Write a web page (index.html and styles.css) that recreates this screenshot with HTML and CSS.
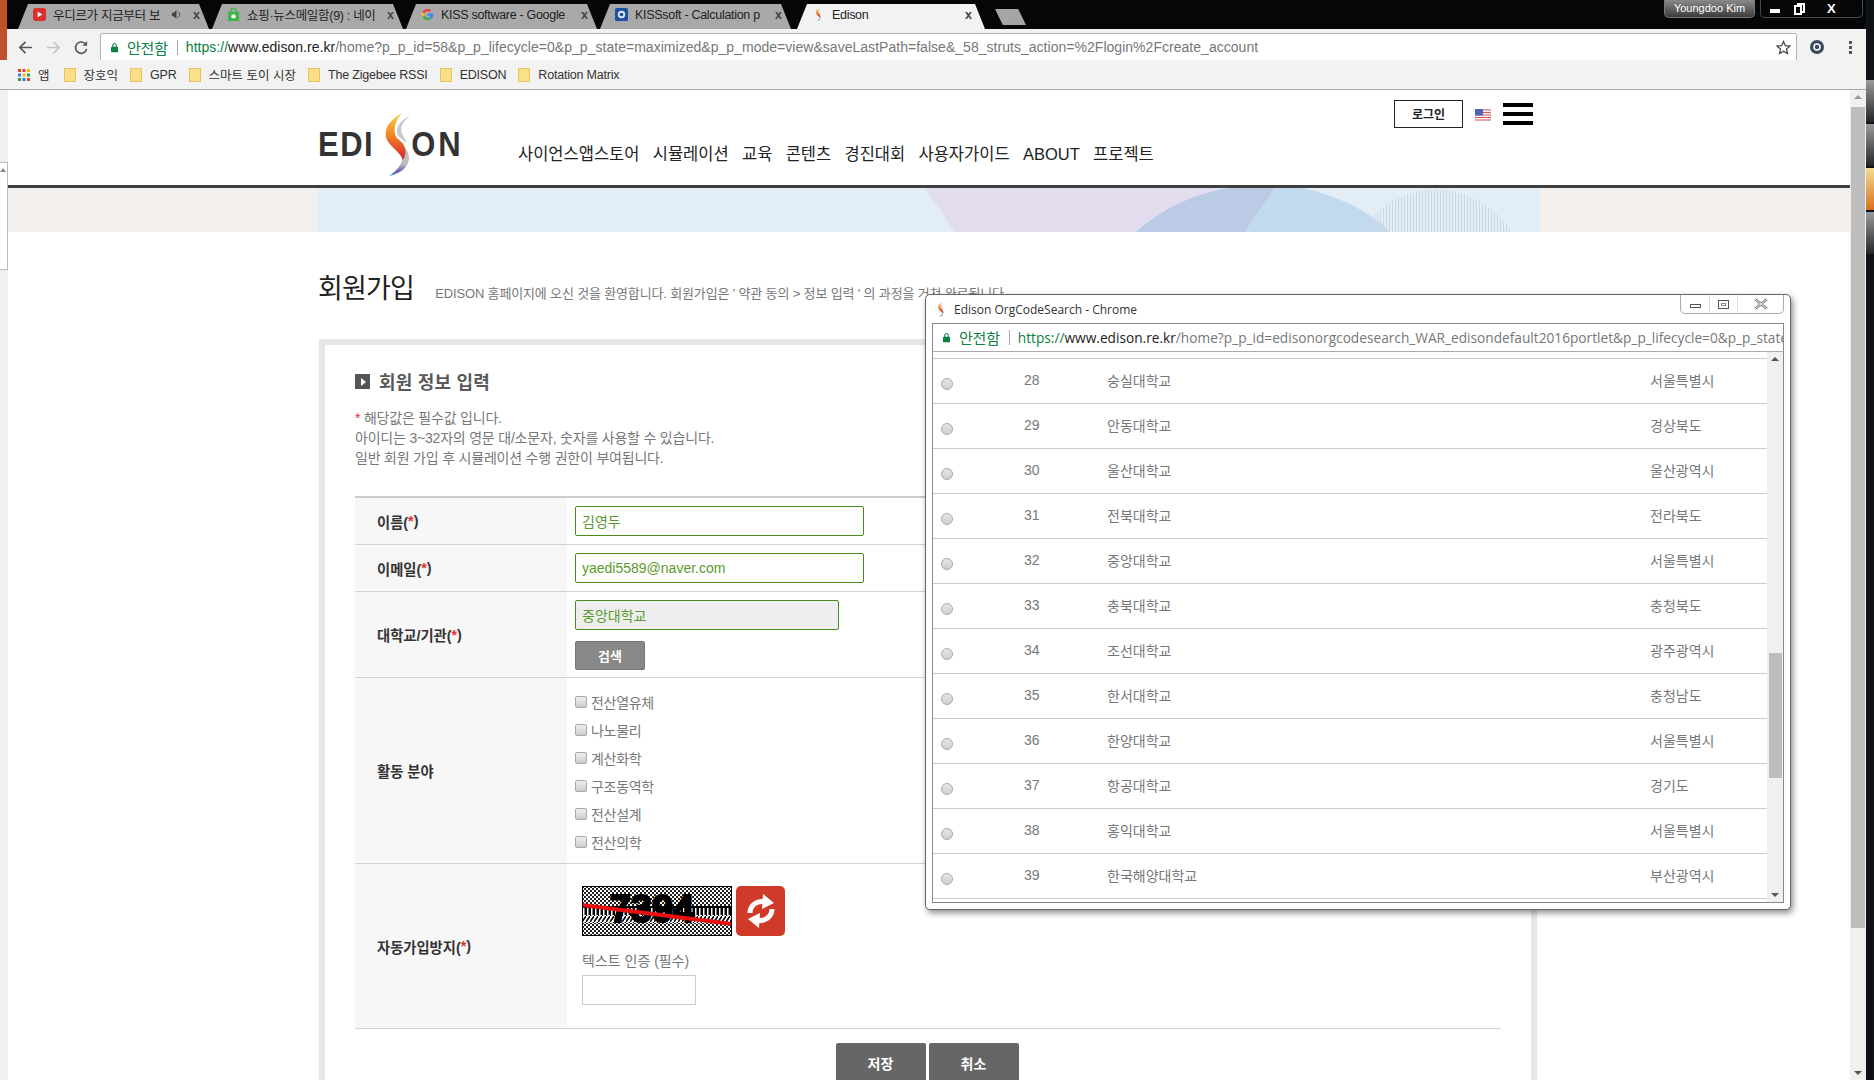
FILE: index.html
```html
<!DOCTYPE html>
<html lang="ko">
<head>
  <meta charset="UTF-8">
  <title>Edison</title>
  <link rel="stylesheet" href="styles.css">
</head>
<body>
  <svg class="defs" width="0" height="0" aria-hidden="true">
    <defs>
      <linearGradient id="sWarm" x1="0" y1="0" x2="0" y2="1">
        <stop offset="0" stop-color="#f4d24a"/>
        <stop offset="0.45" stop-color="#f08a24"/>
        <stop offset="1" stop-color="#d8202c"/>
      </linearGradient>
      <linearGradient id="sCool" x1="0" y1="0" x2="0" y2="1">
        <stop offset="0" stop-color="#c4c4c4"/>
        <stop offset="0.65" stop-color="#bdbdbd"/>
        <stop offset="0.85" stop-color="#7a5cc0"/>
        <stop offset="1" stop-color="#3a9ad8"/>
      </linearGradient>
      <symbol id="swoosh" viewBox="0 0 25 63">
        <path fill="#c8c8c8" d="M25 3C17 6 11 13 12 20C13 24 18 27 22 30C20 24 14 20 17 12C18 9 21 6 25 3Z"/>
        <path fill="url(#sCool)" d="M13 29C19 33 24 38 24 45C24 54 15 61 4 63C10 59 15 54 17 48C18 42 17 35 13 29Z"/>
        <path fill="url(#sWarm)" d="M17 0C5 7 -1 15 1 24C3 33 14 37 18 47C23 38 20 31 13 26C8 22 8 10 17 0Z"/>
      </symbol>
    </defs>
  </svg>

  <!-- 브라우저 상단 -->
  <div class="tabbar">
    <div class="tab">
      <svg class="tab-icon" viewBox="0 0 14 14"><rect width="14" height="14" rx="3" fill="#d9302a"/><path d="M5 4l5 3-5 3z" fill="#fff"/></svg>
      <span class="tab-title">우디르가 지금부터 보</span>
      <svg class="tab-audio" viewBox="0 0 12 12"><path d="M1 4h2l3-3v10L3 8H1z" fill="#444"/><path d="M8 3c2 2 2 4 0 6" fill="none" stroke="#444"/></svg>
      <span class="tab-close">x</span>
    </div>
    <div class="tab">
      <svg class="tab-icon" viewBox="0 0 14 14"><path d="M1 4h12v10H1z" fill="#3fb54a"/><path d="M4 4c0-5 6-5 6 0" fill="none" stroke="#3fb54a" stroke-width="1.5"/><circle cx="7" cy="9" r="2.4" fill="#fff"/></svg>
      <span class="tab-title">쇼핑·뉴스메일함(9) : 네이</span>
      <span class="tab-close">x</span>
    </div>
    <div class="tab">
      <svg class="tab-icon" viewBox="0 0 14 14"><path d="M12.6 7.2c0-.5 0-.9-.1-1.3H7v2.5h3.2c-.2.8-.6 1.4-1.2 1.8l2 1.5c1.6-1.2 2.6-2.9 2.6-4.5z" fill="#4285f4"/><path d="M7 13c1.7 0 3-.6 4-1.5L9 10c-.5.4-1.2.6-2 .6-1.6 0-2.9-1-3.4-2.5l-2 1.6C2.6 11.7 4.6 13 7 13z" fill="#34a853"/><path d="M3.6 8.1c-.2-.7-.2-1.5 0-2.2l-2-1.6c-.9 1.7-.9 3.7 0 5.4z" fill="#fbbc05"/><path d="M7 3.4c.9 0 1.7.3 2.3.9l1.8-1.8C10 1.5 8.600 1 7 1 4.600 1 2.600 2.300 1.600 4.300l2 1.600C4.100 4.400 5.400 3.400 7 3.400z" fill="#ea4335"/></svg>
      <span class="tab-title">KISS software - Google</span>
      <span class="tab-close">x</span>
    </div>
    <div class="tab">
      <svg class="tab-icon" viewBox="0 0 14 14"><rect width="14" height="14" rx="2" fill="#1d4f9c"/><circle cx="7" cy="7" r="4" fill="#dfe9f5"/><circle cx="7" cy="7" r="2" fill="#1d4f9c"/></svg>
      <span class="tab-title">KISSsoft - Calculation p</span>
      <span class="tab-close">x</span>
    </div>
    <div class="tab tab-active">
      <svg class="tab-icon" viewBox="0 0 25 63"><use href="#swoosh"/></svg>
      <span class="tab-title">Edison</span>
      <span class="tab-close">x</span>
    </div>
    <div class="tab-new"></div>
    <div class="win-area">
      <div class="win-user">Youngdoo Kim</div>
      <div class="win-buttons">
        <svg class="win-min" viewBox="0 0 12 12"><rect x="1" y="6" width="10" height="4" fill="#fff"/></svg>
        <svg class="win-max" viewBox="0 0 12 12"><path d="M4 1h7v8H9M2 3h6v8H2z" fill="none" stroke="#fff" stroke-width="2"/></svg>
        <span class="win-close">X</span>
      </div>
    </div>
  </div>

  <div class="toolbar">
    <svg class="nav-icon" viewBox="0 0 16 16"><path d="M15 8H2M8 2L2 8l6 6" fill="none" stroke="#555" stroke-width="1.8"/></svg>
    <svg class="nav-icon" viewBox="0 0 16 16"><path d="M1 8h13M8 2l6 6-6 6" fill="none" stroke="#c4c4c4" stroke-width="1.8"/></svg>
    <svg class="nav-icon" viewBox="0 0 16 16"><path d="M13.5 9.5A6 6 0 1 1 12 4" fill="none" stroke="#555" stroke-width="1.8"/><path d="M14 1v5H9z" fill="#555"/></svg>
    <div class="omnibox">
      <svg class="lock" viewBox="0 0 8 11"><path d="M2 5V3a2 2 0 0 1 4 0v2" fill="none" stroke="#0b8043" stroke-width="1.2"/><rect y="4.5" width="8" height="6.5" rx="1" fill="#0b8043"/></svg>
      <span class="secure">안전함</span>
      <span class="omni-sep"></span>
      <span class="url"><span class="url-https">https://</span><span class="url-host">www.edison.re.kr</span>/home?p_p_id=58&amp;p_p_lifecycle=0&amp;p_p_state=maximized&amp;p_p_mode=view&amp;saveLastPath=false&amp;_58_struts_action=%2Flogin%2Fcreate_account</span>
      <svg class="star" viewBox="0 0 16 16"><path d="M8 1.5l2 4.500 4.800.5-3.600 3.200 1 4.800L8 12l-4.200 2.500 1-4.800L1.200 6.500 6 6z" fill="none" stroke="#444" stroke-width="1.3"/></svg>
    </div>
    <svg class="ext" viewBox="0 0 14 14"><circle cx="7" cy="7" r="7" fill="#3a4a5c"/><circle cx="7" cy="7" r="3" fill="none" stroke="#fff" stroke-width="1.5"/></svg>
    <div class="dots"><i></i><i></i><i></i></div>
  </div>

  <div class="bookmarks">
    <svg class="apps" viewBox="0 0 12 12">
      <g fill="#d9453a"><rect width="3" height="3"/><rect x="4.5" width="3" height="3"/></g>
      <rect x="9" width="3" height="3" fill="#f2b600"/>
      <g fill="#3a7be0"><rect y="4.5" width="3" height="3"/></g>
      <rect x="4.5" y="4.5" width="3" height="3" fill="#f2b600"/>
      <rect x="9" y="4.5" width="3" height="3" fill="#2f9e4f"/>
      <g fill="#2f9e4f"><rect y="9" width="3" height="3"/></g>
      <rect x="4.5" y="9" width="3" height="3" fill="#3a7be0"/>
      <rect x="9" y="9" width="3" height="3" fill="#d9453a"/>
    </svg>
    <span class="bm-apps">앱</span>
    <span class="bm"><i class="folder"></i>장호익</span>
    <span class="bm bm-en"><i class="folder"></i>GPR</span>
    <span class="bm"><i class="folder"></i>스마트 토이 시장</span>
    <span class="bm bm-en"><i class="folder"></i>The Zigebee RSSI</span>
    <span class="bm bm-en"><i class="folder"></i>EDISON</span>
    <span class="bm bm-en"><i class="folder"></i>Rotation Matrix</span>
  </div>

  <div class="viewport">
    <div class="left-strip">
      <div class="strip-box"><span class="strip-arrow"></span></div>
    </div>

    <div class="page">
      <header class="site-header">
        <div class="header-inner">
          <a class="logo" aria-label="EDISON">
            <span class="logo-word">EDI</span>
            <svg class="logo-s" viewBox="0 0 25 63"><use href="#swoosh"/></svg>
            <span class="logo-word logo-word-end">ON</span>
          </a>
          <nav class="main-nav">
            <a>사이언스앱스토어</a>
            <a>시뮬레이션</a>
            <a>교육</a>
            <a>콘텐츠</a>
            <a>경진대회</a>
            <a>사용자가이드</a>
            <a>ABOUT</a>
            <a>프로젝트</a>
          </nav>
          <div class="header-right">
            <button class="login-btn">로그인</button>
            <svg class="flag" viewBox="0 0 16 12">
              <rect width="16" height="12" fill="#f3f3f8"/>
              <path d="M0 1h16M0 3.5h16M0 6h16M0 8.5h16M0 11h16" stroke="#e0585c" stroke-width="1.2"/>
              <rect width="8" height="6.5" fill="#4a64b8"/>
            </svg>
            <div class="hamburger"><i></i><i></i><i></i></div>
          </div>
        </div>
      </header>

      <div class="banner">
        <svg class="banner-art" viewBox="0 0 1222 44" preserveAspectRatio="none">
          <defs>
            <pattern id="stripes" width="3" height="4" patternUnits="userSpaceOnUse">
              <rect width="1" height="4" fill="#c9d9e8"/>
            </pattern>
          </defs>
          <path d="M607 0L637 44H818C845 20 875 6 910 0Z" fill="#e3dcef"/>
          <path d="M818 44C845 20 875 6 910 0H957L927 44Z" fill="#bccbe5"/>
          <path d="M957 0L927 44H1072C1050 22 1020 8 985 0Z" fill="#c1daee"/>
          <path d="M1045 44C1060 15 1090 2 1117 2C1150 2 1180 20 1194 44Z" fill="url(#stripes)"/>
        </svg>
      </div>

      <main class="content">
        <div class="page-title">
          <h1>회원가입</h1>
          <p>EDISON 홈페이지에 오신 것을 환영합니다. 회원가입은 ' 약관 동의 &gt; 정보 입력 ' 의 과정을 거쳐 완료됩니다.</p>
        </div>

        <section class="card">
          <h2 class="section-title"><i class="title-icon"></i>회원 정보 입력</h2>
          <div class="notes">
            <p><span class="req">*</span> 해당값은 필수값 입니다.</p>
            <p>아이디는 3~32자의 영문 대/소문자, 숫자를 사용할 수 있습니다.</p>
            <p>일반 회원 가입 후 시뮬레이션 수행 권한이 부여됩니다.</p>
          </div>

          <div class="form-table">
            <div class="form-row row-name">
              <div class="form-label">이름(<span class="req">*</span>)</div>
              <div class="form-field"><input class="text-input" value="김영두"></div>
            </div>
            <div class="form-row row-name">
              <div class="form-label">이메일(<span class="req">*</span>)</div>
              <div class="form-field"><input class="text-input" value="yaedi5589@naver.com"></div>
            </div>
            <div class="form-row row-org">
              <div class="form-label">대학교/기관(<span class="req">*</span>)</div>
              <div class="form-field field-stack">
                <input class="text-input input-readonly" value="중앙대학교" readonly>
                <button class="search-btn">검색</button>
              </div>
            </div>
            <div class="form-row row-area">
              <div class="form-label">활동 분야</div>
              <div class="form-field check-list">
                <label class="check"><input type="checkbox">전산열유체</label>
                <label class="check"><input type="checkbox">나노물리</label>
                <label class="check"><input type="checkbox">계산화학</label>
                <label class="check"><input type="checkbox">구조동역학</label>
                <label class="check"><input type="checkbox">전산설계</label>
                <label class="check"><input type="checkbox">전산의학</label>
              </div>
            </div>
            <div class="form-row row-captcha">
              <div class="form-label">자동가입방지(<span class="req">*</span>)</div>
              <div class="form-field captcha-field">
                <div class="captcha-line">
                  <svg class="captcha" viewBox="0 0 150 50">
                    <defs>
                      <pattern id="dots" width="4" height="4" patternUnits="userSpaceOnUse">
                        <rect width="4" height="4" fill="#fff"/>
                        <rect width="2" height="2" fill="#222"/>
                        <rect x="2" y="2" width="2" height="2" fill="#222"/>
                      </pattern>
                      <pattern id="bars" width="4" height="8" patternUnits="userSpaceOnUse">
                        <rect width="4" height="8" fill="#000"/>
                        <rect x="1" width="1.5" height="8" fill="#fff"/>
                      </pattern>
                      <pattern id="hatch" width="4" height="6" patternUnits="userSpaceOnUse">
                        <rect width="4" height="6" fill="#fff"/>
                        <path d="M0 6L4 0" stroke="#000" stroke-width="1.6"/>
                      </pattern>
                    </defs>
                    <rect width="150" height="50" fill="url(#dots)"/>
                    <rect y="20" width="150" height="8" fill="#000"/>
                    <rect y="22" width="150" height="7" fill="url(#bars)"/>
                    <rect y="29" width="150" height="8" fill="url(#hatch)"/>
                    <text class="captcha-text" x="70" y="36" text-anchor="middle">7394</text>
                    <path d="M0 19L150 38" stroke="#e80f0f" stroke-width="4"/>
                    <rect x=".5" y=".5" width="149" height="49" fill="none" stroke="#000"/>
                  </svg>
                  <button class="refresh-btn" aria-label="새로고침">
                    <svg viewBox="0 0 30 34">
                      <path d="M4 19A11.5 11.5 0 0 1 19 8" fill="none" stroke="#fff" stroke-width="5"/>
                      <path d="M17 0L28 9L16 15Z" fill="#fff"/>
                      <path d="M26 15A11.5 11.5 0 0 1 11 26" fill="none" stroke="#fff" stroke-width="5"/>
                      <path d="M13 34L2 25L14 19Z" fill="#fff"/>
                    </svg>
                  </button>
                </div>
                <div class="captcha-label">텍스트 인증 (필수)</div>
                <input class="captcha-input">
              </div>
            </div>
          </div>

          <div class="form-actions">
            <button class="action-btn">저장</button>
            <button class="action-btn">취소</button>
          </div>
        </section>
      </main>
    </div>

    <div class="page-scroll">
      <span class="arrow-up"></span>
      <div class="page-thumb"></div>
      <span class="arrow-down"></span>
    </div>
    <div class="taskbar-edge">
      <i class="edge-tile"></i>
      <i class="edge-tile"></i>
      <i class="edge-tile edge-orange"></i>
      <i class="edge-tile"></i>
    </div>
  </div>

  <!-- 기관 검색 팝업 -->
  <div class="popup">
    <div class="popup-title">
      <svg class="popup-fav" viewBox="0 0 25 63"><use href="#swoosh"/></svg>
      <span>Edison OrgCodeSearch - Chrome</span>
      <div class="popup-controls">
        <span class="ctl"><i class="ctl-min"></i></span>
        <span class="ctl"><i class="ctl-max"></i></span>
        <span class="ctl ctl-x">
          <svg viewBox="0 0 12 10"><path d="M1 1l10 8M11 1L1 9" stroke="#777" stroke-width="2.2"/><path d="M1 1l10 8M11 1L1 9" stroke="#fff" stroke-width=".8"/></svg>
        </span>
      </div>
    </div>
    <div class="popup-address">
      <svg class="lock" viewBox="0 0 8 11"><path d="M2 5V3a2 2 0 0 1 4 0v2" fill="none" stroke="#0b8043" stroke-width="1.2"/><rect y="4.5" width="8" height="6.5" rx="1" fill="#0b8043"/></svg>
      <span class="secure">안전함</span>
      <span class="omni-sep"></span>
      <span class="popup-url"><span class="url-https">https://</span><span class="url-host">www.edison.re.kr</span>/home?p_p_id=edisonorgcodesearch_WAR_edisondefault2016portlet&amp;p_p_lifecycle=0&amp;p_p_state</span>
    </div>
    <div class="popup-body">
      <div class="org-list">
        <div class="org-row"><i class="radio"></i><span>28</span><span>숭실대학교</span><span>서울특별시</span></div>
        <div class="org-row"><i class="radio"></i><span>29</span><span>안동대학교</span><span>경상북도</span></div>
        <div class="org-row"><i class="radio"></i><span>30</span><span>울산대학교</span><span>울산광역시</span></div>
        <div class="org-row"><i class="radio"></i><span>31</span><span>전북대학교</span><span>전라북도</span></div>
        <div class="org-row"><i class="radio"></i><span>32</span><span>중앙대학교</span><span>서울특별시</span></div>
        <div class="org-row"><i class="radio"></i><span>33</span><span>충북대학교</span><span>충청북도</span></div>
        <div class="org-row"><i class="radio"></i><span>34</span><span>조선대학교</span><span>광주광역시</span></div>
        <div class="org-row"><i class="radio"></i><span>35</span><span>한서대학교</span><span>충청남도</span></div>
        <div class="org-row"><i class="radio"></i><span>36</span><span>한양대학교</span><span>서울특별시</span></div>
        <div class="org-row"><i class="radio"></i><span>37</span><span>항공대학교</span><span>경기도</span></div>
        <div class="org-row"><i class="radio"></i><span>38</span><span>홍익대학교</span><span>서울특별시</span></div>
        <div class="org-row"><i class="radio"></i><span>39</span><span>한국해양대학교</span><span>부산광역시</span></div>
      </div>
      <div class="popup-scroll">
        <span class="arrow-up"></span>
        <div class="popup-thumb"></div>
        <span class="arrow-down"></span>
      </div>
    </div>
  </div>
</body>
</html>
```

FILE: styles.css
```css
* {
  box-sizing: border-box;
  margin: 0;
  padding: 0;
}
html, body {
  width: 1874px;
  height: 1080px;
  overflow: hidden;
}
body {
  position: relative;
  display: flex;
  flex-direction: column;
  background: #fff;
  font-family: "Liberation Sans", "Noto Sans CJK KR", sans-serif;
  color: #777;
}
.defs {
  position: absolute;
}
i {
  display: block;
}

/* tabs */
.tabbar {
  display: flex;
  align-items: flex-end;
  height: 29px;
  flex: none;
  padding-left: 18px;
  background: #050608;
  box-shadow: inset 7px 0 0 #c0502c;
}
.tab {
  display: flex;
  align-items: center;
  width: 191px;
  height: 25px;
  margin-right: 3px;
  padding: 0 9px 4px 15px;
  background: #a9a9a9;
  clip-path: polygon(10px 0, calc(100% - 10px) 0, 100% 100%, 0 100%);
  font-size: 12.5px;
  color: #222;
}
.tab-active {
  width: 188px;
  margin-left: 3px;
  padding-right: 13px;
  background: #f2f2f2;
}
.tab-icon {
  width: 13px;
  height: 13px;
  flex: none;
  margin-right: 7px;
}
.tab-title {
  flex: 1;
  overflow: hidden;
  white-space: nowrap;
  letter-spacing: -0.3px;
}
.tab-audio {
  width: 11px;
  height: 11px;
  flex: none;
  margin-right: 5px;
}
.tab-close {
  flex: none;
  margin-left: 6px;
  font-weight: bold;
  color: #444;
}
.tab-new {
  width: 31px;
  height: 16px;
  margin: 0 0 4px 7px;
  background: #a5a5a5;
  clip-path: polygon(0 0, 75% 0, 100% 100%, 25% 100%);
}
.win-area {
  display: flex;
  align-self: flex-start;
  margin-left: auto;
  padding-right: 11px;
}
.win-user {
  width: 91px;
  height: 18px;
  border: 1px solid #777;
  border-top: none;
  border-radius: 0 0 5px 5px;
  background: linear-gradient(#8a8a8a, #3c3c3c);
  font-size: 11px;
  line-height: 16px;
  text-align: center;
  color: #fff;
}
.win-buttons {
  display: flex;
  align-items: center;
  width: 103px;
  height: 18px;
  margin-left: 5px;
  border: 1px solid #4a4a4a;
  border-top: none;
  border-radius: 0 0 5px 5px;
}
.win-min, .win-max {
  width: 12px;
  height: 12px;
  margin-left: 8px;
}
.win-max {
  margin-left: 12px;
}
.win-close {
  margin-left: 22px;
  font-size: 13px;
  font-weight: bold;
  color: #fff;
}

/* toolbar */
.toolbar {
  display: flex;
  align-items: center;
  height: 31px;
  flex: none;
  padding: 5px 0 0 18px;
  background: #f2f2f2;
  box-shadow: inset 7px 0 0 #c0502c;
}
.nav-icon {
  width: 15px;
  height: 15px;
  margin-right: 13px;
  flex: none;
}
.omnibox {
  display: flex;
  align-items: center;
  flex: none;
  width: 1697px;
  height: 28px;
  margin-left: -2px;
  padding-left: 10px;
  border: 1px solid #b4b4b4;
  border-radius: 2px;
  background: #fff;
  font-size: 15px;
}
.lock {
  width: 7px;
  height: 11px;
  flex: none;
}
.secure {
  margin-left: 9px;
  flex: none;
  color: #0b8043;
  letter-spacing: -0.2px;
}
.omni-sep {
  width: 1px;
  height: 15px;
  flex: none;
  margin: 0 8px 0 9px;
  background: #aaa;
}
.url {
  flex: 1;
  white-space: nowrap;
  overflow: hidden;
  font-size: 14px;
  letter-spacing: 0.03px;
  color: #777;
}
.url-https {
  color: #0b8043;
}
.url-host {
  color: #222;
}
.star {
  width: 15px;
  height: 15px;
  margin-right: 5px;
  flex: none;
}
.ext {
  width: 14px;
  height: 14px;
  margin-left: 13px;
  flex: none;
}
.dots {
  margin-left: 25px;
}
.dots i {
  width: 3px;
  height: 3px;
  margin: 2px 0;
  background: #555;
}

/* bookmarks */
.bookmarks {
  display: flex;
  align-items: center;
  height: 30px;
  flex: none;
  padding-left: 18px;
  border-bottom: 1px solid #aaa;
  background: #f2f2f2;
  font-size: 12.5px;
  color: #333;
}
.apps {
  width: 12px;
  height: 12px;
}
.bm-apps {
  margin-left: 8px;
  margin-right: 14px;
}
.bm {
  display: flex;
  align-items: center;
  margin-right: 12px;
  white-space: nowrap;
}
.bm-en {
  letter-spacing: -0.2px;
}
.folder {
  width: 12px;
  height: 14px;
  margin-right: 8px;
  border: 1px solid #e6c35a;
  background: #fbe08a;
}

/* page */
.viewport {
  display: flex;
  flex: 1;
  min-height: 0;
}
.left-strip {
  width: 8px;
  flex: none;
  padding-top: 72px;
  background: #f0f0f0;
}
.strip-box {
  height: 108px;
  border: 1px solid #bbb;
  border-left: none;
  background: #fff;
}
.strip-arrow {
  display: block;
  width: 0;
  margin-top: 5px;
  border: 3px solid transparent;
  border-top: none;
  border-bottom: 4px solid #888;
}
.page {
  flex: 1;
  min-width: 0;
  overflow: hidden;
  background: #fff;
}
.site-header {
  height: 98px;
  border-bottom: 3px solid #3f3f3f;
}
.header-inner {
  display: flex;
  width: 1222px;
  height: 95px;
  margin-left: 310px;
}
.logo {
  display: flex;
  align-items: center;
  width: 147px;
  height: 63px;
  flex: none;
  margin-top: 23px;
  font-size: 31px;
  font-weight: bold;
  letter-spacing: 1.5px;
  color: #333;
}
.logo-word {
  transform: scaleY(1.12);
}
.logo-word-end {
  letter-spacing: 3px;
}
.logo-s {
  width: 25px;
  height: 63px;
  margin: 0 1px 0 11px;
  flex: none;
}
.main-nav {
  display: flex;
  gap: 13.3px;
  margin: 51px 0 0 53px;
  height: 26px;
  font-size: 16.5px;
  line-height: 26px;
  color: #222;
  white-space: nowrap;
}
.header-right {
  display: flex;
  align-items: flex-start;
  margin: 10px 0 0 auto;
  padding-right: 7px;
}
.login-btn {
  width: 69px;
  height: 28px;
  padding-bottom: 2px;
  border: 1px solid #222;
  background: #fff;
  font: bold 12px "Liberation Sans", "Noto Sans CJK KR", sans-serif;
  color: #222;
}
.flag {
  width: 16px;
  height: 12px;
  margin: 9px 12px 0;
}
.hamburger {
  width: 30px;
  margin-top: 3px;
}
.hamburger i {
  height: 4px;
  margin-bottom: 5px;
  background: #000;
}
.banner {
  height: 44px;
  padding-left: 310px;
  background: #f3efec;
}
.banner-art {
  display: block;
  width: 1222px;
  height: 44px;
  background: #e3edf5;
}
.content {
  width: 1222px;
  margin-left: 310px;
}
.page-title {
  display: flex;
  align-items: flex-end;
  height: 107px;
  padding-bottom: 32px;
}
.page-title h1 {
  font-size: 27px;
  font-weight: normal;
  line-height: 36px;
  letter-spacing: -0.8px;
  color: #222;
}
.page-title p {
  margin-left: 21px;
  padding-bottom: 5px;
  font-size: 13px;
  letter-spacing: -0.15px;
  white-space: nowrap;
}
.card {
  width: 1218px;
  height: 780px;
  margin-left: 1px;
  padding: 22px 30px 0;
  border: 6px solid #e6e6e6;
  background: #fff;
}
.section-title {
  display: flex;
  align-items: center;
  height: 28px;
  font-size: 18px;
  font-weight: bold;
  letter-spacing: 0.2px;
  color: #5a5a5a;
}
.title-icon {
  position: relative;
  width: 15px;
  height: 15px;
  margin-right: 9px;
  background: #555;
}
.title-icon::after {
  content: "";
  position: absolute;
  left: 6px;
  top: 4px;
  border: 4px solid transparent;
  border-left: 5px solid #fff;
  border-right: none;
}
.notes {
  margin-top: 13px;
  font-size: 14px;
  line-height: 20px;
  letter-spacing: -0.2px;
}
.req {
  color: #e0322c;
}

/* form */
.form-table {
  margin-top: 28px;
  border-top: 2px solid #ccc;
}
.form-row {
  display: flex;
  border-bottom: 1px solid #d4d4d4;
}
.row-name {
  height: 47px;
}
.row-org {
  height: 86px;
}
.row-area {
  height: 186px;
}
.row-captcha {
  height: 165px;
}
.form-label {
  display: flex;
  align-items: center;
  width: 212px;
  flex: none;
  padding-left: 22px;
  background: #f7f7f7;
  font-size: 14.3px;
  font-weight: bold;
  color: #333;
}
.form-field {
  flex: 1;
  padding: 8px 0 0 8px;
}
.text-input {
  display: block;
  width: 289px;
  height: 30px;
  padding: 0 6px;
  border: 1px solid #4c8a1e;
  border-radius: 2px;
  font: 14px "Liberation Sans", "Noto Sans CJK KR", sans-serif;
  color: #5a9a2c;
}
.input-readonly {
  width: 264px;
  background: #eee;
}
.search-btn {
  display: block;
  width: 70px;
  height: 29px;
  margin-top: 11px;
  border: 1px solid #777;
  border-radius: 2px;
  background: #888;
  font: bold 13px "Liberation Sans", "Noto Sans CJK KR", sans-serif;
  color: #fff;
}
.form-field.check-list {
  padding: 10px 0 0 8px;
}
.check {
  display: flex;
  align-items: center;
  height: 28px;
  font-size: 14px;
  letter-spacing: -0.3px;
}
.check input {
  appearance: none;
  width: 12px;
  height: 12px;
  margin-right: 4px;
  border: 1px solid #aaa;
  border-radius: 2px;
  background: linear-gradient(#eee, #ccc);
}
.form-field.captcha-field {
  padding: 22px 0 0 15px;
}
.captcha-line {
  display: flex;
  gap: 4px;
}
.captcha {
  display: block;
  width: 150px;
  height: 50px;
}
.captcha-text {
  font-family: "Liberation Sans", sans-serif;
  font-size: 38px;
  font-weight: bold;
  fill: #000;
  stroke: #000;
  stroke-width: 2px;
}
.refresh-btn {
  display: flex;
  align-items: center;
  justify-content: center;
  width: 49px;
  height: 50px;
  border: none;
  border-radius: 5px;
  background: #d03a28;
}
.refresh-btn svg {
  width: 30px;
  height: 34px;
}
.captcha-label {
  margin-top: 16px;
  font-size: 14px;
  line-height: 18px;
}
.captcha-input {
  display: block;
  width: 114px;
  height: 30px;
  margin-top: 5px;
  border: 1px solid #ccc;
}
.form-actions {
  display: flex;
  justify-content: center;
  gap: 3px;
  margin: 14px 0 0 -2px;
}
.action-btn {
  width: 90px;
  height: 40px;
  border: none;
  border-radius: 2px;
  background: #666;
  font: bold 14px "Liberation Sans", "Noto Sans CJK KR", sans-serif;
  color: #fff;
}

/* scrollbar of the page */
.page-scroll {
  display: flex;
  flex-direction: column;
  align-items: center;
  width: 16px;
  flex: none;
  background: #f0f0f0;
}
.arrow-up, .arrow-down {
  display: block;
  flex: none;
  width: 0;
  border: 4px solid transparent;
}
.arrow-up {
  margin-top: 5px;
  border-top: none;
  border-bottom: 4px solid #555;
}
.arrow-down {
  margin-top: auto;
  margin-bottom: 5px;
  border-bottom: none;
  border-top: 4px solid #555;
}
.page-scroll .arrow-up {
  border-bottom-color: #999;
}
.page-thumb {
  width: 14px;
  height: 821px;
  margin-top: 8px;
  background: #bdbdbd;
}
.taskbar-edge {
  position: relative;
  width: 8px;
  flex: none;
  margin-top: -90px;
  padding-top: 80px;
  background: #0e1216;
}
.edge-tile {
  height: 42px;
  margin-bottom: 2px;
  background: linear-gradient(#9a9a9a, #22262a);
}
.edge-orange {
  background: linear-gradient(#f3dc94, #d9701c);
}

/* popup window */
.popup {
  position: absolute;
  left: 925px;
  top: 294px;
  width: 866px;
  height: 616px;
  display: flex;
  flex-direction: column;
  padding: 0 6px 6px;
  border: 1px solid #666;
  border-radius: 5px;
  background: #fff;
  box-shadow: 2px 3px 6px rgba(0, 0, 0, 0.45);
}
.popup-title {
  display: flex;
  align-items: center;
  height: 28px;
  flex: none;
  font: 12px "Open Sans", "Liberation Sans", sans-serif;
  color: #333;
}
.popup-fav {
  width: 10px;
  height: 15px;
  margin: 0 8px 0 4px;
}
.popup-controls {
  display: flex;
  align-self: flex-start;
  margin-left: auto;
  height: 19px;
  border: 1px solid #aaa;
  border-top: none;
  border-radius: 0 0 5px 5px;
}
.ctl {
  display: flex;
  align-items: center;
  justify-content: center;
  width: 28px;
  border-left: 1px solid #ddd;
}
.ctl:first-child {
  border-left: none;
}
.ctl-x {
  width: 46px;
}
.ctl-x svg {
  width: 14px;
  height: 12px;
}
.ctl-min {
  width: 11px;
  height: 4px;
  margin-top: 3px;
  border: 1px solid #555;
}
.ctl-max {
  width: 11px;
  height: 9px;
  border: 1px solid #555;
  box-shadow: inset 0 0 0 2px #fff, inset 0 0 0 3px #888;
}
.popup-address {
  display: flex;
  align-items: center;
  height: 29px;
  flex: none;
  padding-left: 10px;
  border: 1px solid #888;
  border-bottom-color: #aaa;
  font-size: 15px;
}
.popup-url {
  overflow: hidden;
  white-space: nowrap;
  font: 13.7px "Open Sans", "Liberation Sans", sans-serif;
  color: #777;
}
.popup-body {
  display: flex;
  flex: 1;
  min-height: 0;
  border: 1px solid #888;
  border-top: none;
}
.org-list {
  flex: 1;
  padding-top: 6px;
}
.org-row {
  display: grid;
  grid-template-columns: 91px 83px 543px 1fr;
  align-items: center;
  height: 45px;
  padding-bottom: 2px;
  border-bottom: 1px solid #ccc;
  font-size: 14px;
  color: #777;
}
.org-row:first-child {
  height: 46px;
  border-top: 1px solid #ccc;
}
.radio {
  width: 12px;
  height: 12px;
  margin: 8px 0 0 8px;
  border: 1px solid #aaa;
  border-radius: 50%;
  background: linear-gradient(#e6e6e6, #cfcfcf);
}
.popup-scroll {
  display: flex;
  flex-direction: column;
  align-items: center;
  width: 16px;
  flex: none;
  background: #f0f0f0;
}
.popup-thumb {
  width: 13px;
  height: 125px;
  margin-top: 292px;
  background: #bdbdbd;
}
```
